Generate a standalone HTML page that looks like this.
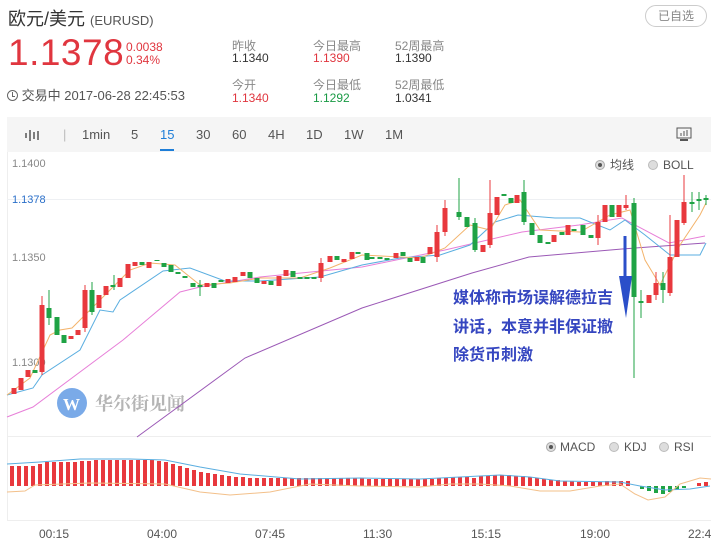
<!DOCTYPE html>
<html><head><meta charset="utf-8"><style>
*{margin:0;padding:0;box-sizing:border-box}
body{width:724px;height:548px;background:#fff;font-family:"Liberation Sans","Noto Sans CJK SC",sans-serif;position:relative;overflow:hidden;color:#333}
.a{position:absolute;white-space:nowrap}
.lb{font-size:12px;color:#888}
.v{font-size:12px;color:#333}
.r{color:#e0363f}.g{color:#1a9a45}
.tb{position:absolute;left:7px;top:117px;width:704px;height:35px;background:#f5f5f5}
.tb span{position:absolute;top:10px;font-size:13px;color:#555}
</style></head><body>
<div class="a" style="left:8px;top:5px;font-size:18px;color:#333">欧元/美元 <span style="font-size:13px;color:#555">(EURUSD)</span></div>
<div class="a" style="left:645px;top:5px;width:62px;height:22px;border:1px solid #ccc;border-radius:11px;font-size:12px;color:#888;text-align:center;line-height:20px">已自选</div>
<div class="a r" style="left:8px;top:32px;font-size:37px;letter-spacing:0.5px">1.1378</div>
<div class="a r" style="left:126px;top:41px;font-size:12px;line-height:13px">0.0038<br>0.34%</div>
<div class="a" style="left:7px;top:85px;font-size:13px;color:#555"><span style="display:inline-block;width:11px;height:11px;border:1px solid #666;border-radius:50%;vertical-align:-1px;position:relative"><span style="position:absolute;left:4px;top:1px;width:1px;height:4px;background:#666"></span><span style="position:absolute;left:4px;top:5px;width:3px;height:1px;background:#666"></span></span> 交易中 2017-06-28 22:45:53</div>
<div class="a lb" style="left:232px;top:37px">昨收</div><div class="a v" style="left:232px;top:51px">1.1340</div>
<div class="a lb" style="left:313px;top:37px">今日最高</div><div class="a v r" style="left:313px;top:51px">1.1390</div>
<div class="a lb" style="left:395px;top:37px">52周最高</div><div class="a v" style="left:395px;top:51px">1.1390</div>
<div class="a lb" style="left:232px;top:76px">今开</div><div class="a v r" style="left:232px;top:91px">1.1340</div>
<div class="a lb" style="left:313px;top:76px">今日最低</div><div class="a v g" style="left:313px;top:91px">1.1292</div>
<div class="a lb" style="left:395px;top:76px">52周最低</div><div class="a v" style="left:395px;top:91px">1.0341</div>
<div class="tb">
<svg style="position:absolute;left:18px;top:11px" width="18" height="14"><g stroke="#555" stroke-width="1.5"><line x1="1" y1="5" x2="1" y2="10"/><line x1="5" y1="2" x2="5" y2="13"/><line x1="9" y1="4" x2="9" y2="11"/><line x1="13" y1="3" x2="13" y2="12"/></g></svg>
<span style="left:56px;color:#bbb">|</span>
<span style="left:75px">1min</span><span style="left:124px">5</span>
<span style="left:153px;color:#1e7ed8">15</span><div style="position:absolute;left:153px;top:32px;width:14px;height:2px;background:#1e7ed8"></div>
<span style="left:189px">30</span><span style="left:225px">60</span><span style="left:261px">4H</span><span style="left:299px">1D</span><span style="left:337px">1W</span><span style="left:378px">1M</span>
<svg style="position:absolute;left:669px;top:10px" width="16" height="15"><rect x="1" y="1" width="14" height="10" fill="none" stroke="#555"/><g stroke="#555"><line x1="5" y1="9" x2="5" y2="6"/><line x1="8" y1="9" x2="8" y2="4"/><line x1="11" y1="9" x2="11" y2="3"/><line x1="4" y1="13" x2="12" y2="13" stroke-width="2"/></g></svg>
</div>
<svg class="a" style="left:0;top:0" width="724" height="548">
<line x1="7.5" y1="152" x2="7.5" y2="520" stroke="#eee"/>
<line x1="7" y1="199.5" x2="711" y2="199.5" stroke="#eef0f3"/>
<line x1="7" y1="436.5" x2="711" y2="436.5" stroke="#eee"/>
<line x1="7" y1="520.5" x2="711" y2="520.5" stroke="#eee"/>
<g font-size="11" fill="#888" font-family="Liberation Sans,sans-serif">
<text x="12" y="167">1.1400</text><text x="12" y="203" fill="#2a6fc9">1.1378</text><text x="12" y="261">1.1350</text><text x="12" y="366">1.1300</text>
</g>
<circle cx="72" cy="403" r="15" fill="#7aaae8"/>
<text x="63" y="410" font-size="17" font-weight="bold" fill="#fff" font-family="Liberation Serif,serif">W</text>
<text x="95" y="410" font-size="18" font-weight="bold" fill="#b5b5b5" font-family="Noto Serif CJK SC,serif">华尔街见闻</text>
<g fill="none" stroke-width="1">
<polyline stroke="#9b59b6" points="137,437 245,358 362,308 472,273 529,257 622,249 705,243"/>
<polyline stroke="#e77fd8" points="7,417 33,407 123,340 180,292 200,287 260,277 362,267 445,250 522,232 579,225 622,218 669,243 705,236"/>
<polyline stroke="#5aaee0" points="7,395 33,388 42,375 80,350 100,310 113,312 120,300 163,271 190,268 225,281 260,281 320,277 362,265 400,258 440,255 470,245 495,222 518,215 555,218 580,218 610,230 625,220 645,235 670,255 700,255 706,243"/>
<polyline stroke="#f3b36b" points="7,395 30,378 50,335 60,330 72,328 90,310 110,290 130,270 150,263 175,265 200,285 230,283 260,278 300,278 330,268 362,255 420,258 445,248 470,225 490,230 505,205 520,200 540,230 580,232 610,215 630,210 645,260 660,285 680,245 700,215 706,203"/>
</g>
<g stroke="#e8383d" stroke-width="1">
<line x1="42" y1="296" x2="42" y2="375"/><line x1="85" y1="285" x2="85" y2="332"/><line x1="437" y1="225" x2="437" y2="262"/><line x1="445" y1="200" x2="445" y2="236"/><line x1="490" y1="180" x2="490" y2="248"/><line x1="598" y1="215" x2="598" y2="245"/><line x1="670" y1="215" x2="670" y2="296"/><line x1="684" y1="175" x2="684" y2="225"/><line x1="626" y1="195" x2="626" y2="210"/><line x1="656" y1="272" x2="656" y2="300"/><line x1="321" y1="258" x2="321" y2="282"/>
</g>
<g stroke="#1fa345" stroke-width="1">
<line x1="49" y1="290" x2="49" y2="325"/><line x1="92" y1="282" x2="92" y2="315"/><line x1="634" y1="198" x2="634" y2="378"/><line x1="641" y1="290" x2="641" y2="318"/><line x1="524" y1="180" x2="524" y2="225"/><line x1="459" y1="178" x2="459" y2="220"/><line x1="475" y1="218" x2="475" y2="252"/><line x1="200" y1="280" x2="200" y2="296"/><line x1="114" y1="275" x2="114" y2="290"/><line x1="663" y1="272" x2="663" y2="303"/><line x1="692" y1="192" x2="692" y2="212"/><line x1="699" y1="192" x2="699" y2="210"/><line x1="706" y1="195" x2="706" y2="205"/>
</g>
<g fill="#e8383d">
<rect x="11.5" y="388" width="5" height="6"/><rect x="18.5" y="378" width="5" height="12"/><rect x="25.5" y="370" width="5" height="7"/><rect x="39.5" y="305" width="5" height="67"/><rect x="68.5" y="336" width="5" height="3"/><rect x="75.5" y="330" width="5" height="5"/><rect x="82.5" y="290" width="5" height="38"/><rect x="96.5" y="295" width="5" height="13"/><rect x="103.5" y="286" width="5" height="9"/><rect x="117.5" y="278" width="5" height="9"/><rect x="125.5" y="264" width="5" height="14"/><rect x="132.5" y="262" width="5" height="4"/><rect x="146.5" y="262" width="5" height="6"/><rect x="204.5" y="283" width="5" height="4"/><rect x="225.5" y="279" width="5" height="4"/><rect x="232.5" y="277" width="5" height="5"/><rect x="240.5" y="272" width="5" height="4"/><rect x="261.5" y="281" width="5" height="3"/><rect x="276.5" y="276" width="5" height="10"/><rect x="283.5" y="270" width="5" height="6"/><rect x="318.5" y="263" width="5" height="15"/><rect x="327.5" y="256" width="5" height="6"/><rect x="341.5" y="259" width="5" height="3"/><rect x="349.5" y="252" width="5" height="7"/><rect x="393.5" y="253" width="5" height="5"/><rect x="414.5" y="257" width="5" height="4"/><rect x="427.5" y="247" width="5" height="7"/><rect x="434.5" y="232" width="5" height="25"/><rect x="442.5" y="208" width="5" height="24"/><rect x="480.5" y="245" width="5" height="7"/><rect x="487.5" y="213" width="5" height="32"/><rect x="494.5" y="197" width="5" height="18"/><rect x="514.5" y="195" width="5" height="8"/><rect x="551.5" y="235" width="5" height="7"/><rect x="565.5" y="225" width="5" height="10"/><rect x="595.5" y="222" width="5" height="16"/><rect x="602.5" y="205" width="5" height="17"/><rect x="616.5" y="205" width="5" height="12"/><rect x="623.5" y="205" width="5" height="3"/><rect x="646.5" y="295" width="5" height="8"/><rect x="653.5" y="283" width="5" height="12"/><rect x="667.5" y="257" width="5" height="36"/><rect x="674.5" y="220" width="5" height="37"/><rect x="681.5" y="202" width="5" height="21"/>
</g>
<g fill="#1fa345">
<rect x="32.5" y="370" width="5" height="3"/><rect x="46.5" y="308" width="5" height="10"/><rect x="54.5" y="317" width="5" height="18"/><rect x="61.5" y="335" width="5" height="8"/><rect x="89.5" y="290" width="5" height="22"/><rect x="110.5" y="285" width="5" height="2"/><rect x="139.5" y="262" width="5" height="3"/><rect x="154.5" y="260" width="5" height="1"/><rect x="161.5" y="263" width="5" height="4"/><rect x="168.5" y="265" width="5" height="7"/><rect x="175.5" y="272" width="5" height="2"/><rect x="182.5" y="276" width="5" height="2"/><rect x="190.5" y="283" width="5" height="4"/><rect x="197.5" y="285" width="5" height="2"/><rect x="211.5" y="283" width="5" height="5"/><rect x="218.5" y="280" width="5" height="2"/><rect x="247.5" y="272" width="5" height="6"/><rect x="254.5" y="278" width="5" height="5"/><rect x="268.5" y="281" width="5" height="4"/><rect x="290.5" y="271" width="5" height="6"/><rect x="297.5" y="277" width="5" height="2"/><rect x="304.5" y="277" width="5" height="2"/><rect x="311.5" y="277" width="5" height="2"/><rect x="334.5" y="256" width="5" height="4"/><rect x="355.5" y="252" width="5" height="2"/><rect x="364.5" y="253" width="5" height="7"/><rect x="369.5" y="257" width="5" height="2"/><rect x="377.5" y="257" width="5" height="2"/><rect x="384.5" y="258" width="5" height="2"/><rect x="400.5" y="252" width="5" height="4"/><rect x="407.5" y="258" width="5" height="4"/><rect x="420.5" y="257" width="5" height="6"/><rect x="456.5" y="212" width="5" height="5"/><rect x="464.5" y="217" width="5" height="10"/><rect x="472.5" y="223" width="5" height="27"/><rect x="501.5" y="194" width="5" height="2"/><rect x="508.5" y="198" width="5" height="5"/><rect x="521.5" y="192" width="5" height="30"/><rect x="529.5" y="223" width="5" height="12"/><rect x="537.5" y="235" width="5" height="8"/><rect x="545.5" y="242" width="5" height="2"/><rect x="559.5" y="232" width="5" height="3"/><rect x="571.5" y="229" width="5" height="2"/><rect x="580.5" y="225" width="5" height="10"/><rect x="588.5" y="235" width="5" height="3"/><rect x="609.5" y="205" width="5" height="12"/><rect x="631.5" y="203" width="5" height="94"/><rect x="638.5" y="301" width="5" height="2"/><rect x="660.5" y="283" width="5" height="7"/><rect x="689.5" y="202" width="5" height="2"/><rect x="696.5" y="199" width="5" height="2"/><rect x="703.5" y="198" width="5" height="2"/>
</g>
<line x1="625" y1="236" x2="625" y2="290" stroke="#2b4fc9" stroke-width="3"/>
<polygon points="619,276 632,276 626,318" fill="#2b4fc9"/>
<g font-size="16" font-weight="bold" fill="#3546c0" font-family="Noto Sans CJK SC,sans-serif">
<text x="453" y="303">媒体称市场误解德拉吉</text><text x="453" y="332">讲话，本意并非保证撤</text><text x="453" y="360">除货币刺激</text>
</g>
<g font-size="12" fill="#555" font-family="Liberation Sans,Noto Sans CJK SC,sans-serif">
<circle cx="600" cy="165" r="4.5" fill="#ddd" stroke="#aaa"/><circle cx="600" cy="165" r="2" fill="#555"/><text x="610" y="169">均线</text>
<circle cx="653" cy="165" r="4.5" fill="#ddd" stroke="#bbb"/><text x="663" y="169">BOLL</text>
<circle cx="551" cy="447" r="4.5" fill="#ddd" stroke="#aaa"/><circle cx="551" cy="447" r="2" fill="#555"/><text x="560" y="451">MACD</text>
<circle cx="614" cy="447" r="4.5" fill="#ddd" stroke="#bbb"/><text x="624" y="451">KDJ</text>
<circle cx="664" cy="447" r="4.5" fill="#ddd" stroke="#bbb"/><text x="674" y="451">RSI</text>
</g>
<g fill="#e8383d">
<rect x="10" y="466" width="4" height="20"/><rect x="17" y="466" width="4" height="20"/><rect x="24" y="466" width="4" height="20"/><rect x="31" y="466" width="4" height="20"/><rect x="38" y="464" width="4" height="22"/><rect x="45" y="462" width="4" height="24"/><rect x="52" y="462" width="4" height="24"/><rect x="59" y="462" width="4" height="24"/><rect x="66" y="462" width="4" height="24"/><rect x="73" y="462" width="4" height="24"/><rect x="80" y="461" width="4" height="25"/><rect x="87" y="461" width="4" height="25"/><rect x="94" y="460" width="4" height="26"/><rect x="101" y="460" width="4" height="26"/><rect x="108" y="460" width="4" height="26"/><rect x="115" y="460" width="4" height="26"/><rect x="122" y="460" width="4" height="26"/><rect x="129" y="460" width="4" height="26"/><rect x="136" y="460" width="4" height="26"/><rect x="143" y="460" width="4" height="26"/><rect x="150" y="460" width="4" height="26"/><rect x="157" y="461" width="4" height="25"/><rect x="164" y="462" width="4" height="24"/><rect x="171" y="464" width="4" height="22"/><rect x="178" y="466" width="4" height="20"/><rect x="185" y="468" width="4" height="18"/><rect x="192" y="470" width="4" height="16"/><rect x="199" y="472" width="4" height="14"/><rect x="206" y="473" width="4" height="13"/><rect x="213" y="474" width="4" height="12"/><rect x="220" y="475" width="4" height="11"/><rect x="227" y="476" width="4" height="10"/><rect x="234" y="477" width="4" height="9"/><rect x="241" y="477" width="4" height="9"/><rect x="248" y="478" width="4" height="8"/><rect x="255" y="478" width="4" height="8"/><rect x="262" y="478" width="4" height="8"/><rect x="269" y="478" width="4" height="8"/><rect x="276" y="478" width="4" height="8"/><rect x="283" y="478" width="4" height="8"/><rect x="290" y="478" width="4" height="8"/><rect x="297" y="478" width="4" height="8"/><rect x="304" y="478" width="4" height="8"/><rect x="311" y="478" width="4" height="8"/><rect x="318" y="478" width="4" height="8"/><rect x="325" y="478" width="4" height="8"/><rect x="332" y="478" width="4" height="8"/><rect x="339" y="478" width="4" height="8"/><rect x="346" y="478" width="4" height="8"/><rect x="353" y="478" width="4" height="8"/><rect x="360" y="478" width="4" height="8"/><rect x="367" y="479" width="4" height="7"/><rect x="374" y="479" width="4" height="7"/><rect x="381" y="479" width="4" height="7"/><rect x="388" y="479" width="4" height="7"/><rect x="395" y="479" width="4" height="7"/><rect x="402" y="479" width="4" height="7"/><rect x="409" y="479" width="4" height="7"/><rect x="416" y="479" width="4" height="7"/><rect x="423" y="479" width="4" height="7"/><rect x="430" y="479" width="4" height="7"/><rect x="437" y="478" width="4" height="8"/><rect x="444" y="478" width="4" height="8"/><rect x="451" y="477" width="4" height="9"/><rect x="458" y="477" width="4" height="9"/><rect x="465" y="477" width="4" height="9"/><rect x="472" y="478" width="4" height="8"/><rect x="479" y="476" width="4" height="10"/><rect x="486" y="476" width="4" height="10"/><rect x="493" y="475" width="4" height="11"/><rect x="500" y="475" width="4" height="11"/><rect x="507" y="475" width="4" height="11"/><rect x="514" y="476" width="4" height="10"/><rect x="521" y="476" width="4" height="10"/><rect x="528" y="477" width="4" height="9"/><rect x="535" y="478" width="4" height="8"/><rect x="542" y="479" width="4" height="7"/><rect x="549" y="480" width="4" height="6"/><rect x="556" y="480" width="4" height="6"/><rect x="563" y="481" width="4" height="5"/><rect x="570" y="481" width="4" height="5"/><rect x="577" y="482" width="4" height="4"/><rect x="584" y="482" width="4" height="4"/><rect x="591" y="482" width="4" height="4"/><rect x="598" y="482" width="4" height="4"/><rect x="605" y="481" width="4" height="5"/><rect x="612" y="481" width="4" height="5"/><rect x="619" y="481" width="4" height="5"/><rect x="626" y="481" width="4" height="5"/><rect x="697" y="483" width="4" height="3"/><rect x="704" y="482" width="4" height="4"/>
</g>
<g fill="#1fa345">
<rect x="640" y="486" width="4" height="3"/><rect x="647" y="486" width="4" height="5"/><rect x="654" y="486" width="4" height="7"/><rect x="661" y="486" width="4" height="8"/><rect x="668" y="486" width="4" height="6"/><rect x="675" y="486" width="4" height="4"/><rect x="682" y="486" width="4" height="2"/>
</g>
<polyline fill="none" stroke="#5aaee0" points="7,464 40,462 80,459 130,459 165,460 200,467 240,474 300,479 360,478 420,479 460,477 500,475 530,477 560,481 620,482 640,486 665,490 690,489 710,486"/>
<polyline fill="none" stroke="#f3c08a" points="7,492 25,491 35,485 90,483 165,484 200,492 230,495 270,492 310,484 360,486 420,487 450,484 480,484 510,486 540,491 570,491 600,486 620,484 635,494 648,500 665,497 680,484 700,478 711,479"/>
<g font-size="12" fill="#555" font-family="Liberation Sans,sans-serif">
<text x="39" y="538">00:15</text><text x="147" y="538">04:00</text><text x="255" y="538">07:45</text><text x="363" y="538">11:30</text><text x="471" y="538">15:15</text><text x="580" y="538">19:00</text><text x="688" y="538">22:4</text>
</g>
</svg>
</body></html>
